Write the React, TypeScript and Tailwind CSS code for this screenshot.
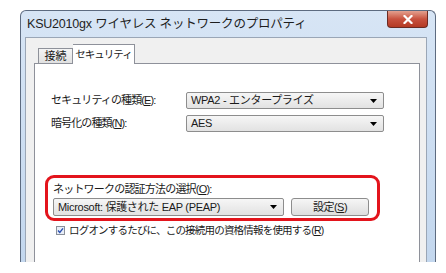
import React from 'react';

const jp = { fontFamily: '"Liberation Sans", "Noto Sans CJK JP", sans-serif' };

const Arrow: React.FC = () => (
    <svg width="7" height="4" viewBox="0 0 7 4" className="shrink-0">
        <path d="M0 0h7L3.5 4z" fill="#000" />
    </svg>
);

const Combo: React.FC<{ text: string; className?: string }> = ({ text, className }) => (
    <div className={`h-[17px] flex items-center justify-between pl-[4px] pr-[6px] border border-[#8d8d8d] rounded-[2px] bg-gradient-to-b from-[#f6f6f6] to-[#e2e2e2] text-[11px] text-[#1a1a1a] tracking-[-0.3px] ${className ?? ''}`}>
        <span className="leading-none whitespace-nowrap">{text}</span>
        <Arrow />
    </div>
);

const App: React.FC = () => {
    return (
        <div className="w-[446px] h-[273px] bg-white pt-[10px] pl-[20px] overflow-hidden" style={jp}>
            {/* Window */}
            <div className="w-[416px] h-[252px] flex flex-col rounded-t-[6px] border-t border-x border-[#5d6b80] bg-gradient-to-b from-[#d7e5f5] to-[#c3d7ee] overflow-hidden">
                {/* Title bar */}
                <div className="h-[26px] flex items-start justify-between pl-[6px] pr-[7px] shrink-0">
                    <span className="mt-[7px] text-[12.5px] leading-none text-[#1e1e1e] whitespace-nowrap tracking-[-0.2px]">
                        KSU2010gx ワイヤレス ネットワークのプロパティ
                    </span>
                    <div className="w-[41px] h-[17px] rounded-b-[4px] border border-[#6b2a22] border-t-0 bg-gradient-to-b from-[#e3a08f] via-[#c8523f] to-[#b43a24] flex items-center justify-center">
                        <svg width="10" height="9" viewBox="0 0 10 9">
                            <path d="M1.5 1l7 7M8.5 1l-7 7" stroke="#fff" strokeWidth="2.2" strokeLinecap="square" />
                        </svg>
                    </div>
                </div>

                {/* Frame + client */}
                <div className="flex-1 flex pl-[4px] pr-[8px]">
                    <div className="flex-1 bg-[#f0f0f0] border-t border-l border-r border-[#9aa6b6] flex flex-col pl-[8px] pr-[6px] pt-[5px]">
                        {/* Tabs */}
                        <div className="h-[20px] flex items-end pl-[4px] relative z-10">
                            <div className="h-[15px] w-[35px] border border-b-0 border-[#8e919a] bg-gradient-to-b from-[#f4f4f4] to-[#e1e1e1] flex items-center justify-center text-[11px] leading-none text-[#1a1a1a] whitespace-nowrap">
                                接続
                            </div>
                            <div className="h-[20px] w-[62px] -mb-[1px] border border-b-0 border-l-0 border-[#8e919a] bg-white flex items-center justify-center pb-[1px] text-[10.5px] leading-none text-[#1a1a1a] tracking-[-1px] whitespace-nowrap">
                                セキュリティ
                            </div>
                        </div>

                        {/* Tab page */}
                        <div className="flex-1 bg-white border-t border-x border-[#8e919a] pt-[28px] pl-[16px] text-[11px] text-[#1a1a1a]">
                            <div className="flex items-center h-[17px]">
                                <span className="w-[135px] tracking-[-0.9px] leading-none whitespace-nowrap">
                                    セキュリティの種類(<u>E</u>):
                                </span>
                                <Combo text="WPA2 - エンタープライズ" className="w-[198px]" />
                            </div>
                            <div className="flex items-center h-[17px] mt-[6px]">
                                <span className="w-[135px] tracking-[-0.9px] leading-none whitespace-nowrap">
                                    暗号化の種類(<u>N</u>):
                                </span>
                                <Combo text="AES" className="w-[198px]" />
                            </div>

                            {/* Authentication group */}
                            <div className="relative mt-[52px] ml-[2px] w-[316px]">
                                <div className="absolute -left-[8px] -top-[9px] w-[335px] h-[46px] border-[3px] border-[#e3141c] rounded-[9px] pointer-events-none z-10" />
                                <div className="h-[13px] leading-none tracking-[-0.8px] whitespace-nowrap">
                                    ネットワークの認証方法の選択(<u>O</u>):
                                </div>
                                <div className="flex items-center gap-[7px] mt-[1px]">
                                    <Combo text="Microsoft: 保護された EAP (PEAP)" className="w-[231px] h-[18px]" />
                                    <button className="w-[78px] h-[18px] border border-[#8d8d8d] rounded-[3px] bg-gradient-to-b from-[#f6f6f6] to-[#dedede] text-[11px] leading-none text-[#1a1a1a] tracking-[-0.5px]">
                                        設定(<u>S</u>)
                                    </button>
                                </div>
                            </div>
                            <div className="flex items-center gap-[4px] mt-[9px] ml-[5px]">
                                <svg width="9" height="9" viewBox="0 0 9 9" className="shrink-0">
                                    <rect x="0.5" y="0.5" width="8" height="8" fill="#e8eef7" stroke="#8a8f99" />
                                    <path d="M2 4.5l1.8 2L7 2.3" stroke="#2b4fb0" strokeWidth="1.4" fill="none" />
                                </svg>
                                <span className="text-[10.5px] leading-none tracking-[-0.8px] whitespace-nowrap">
                                    ログオンするたびに、この接続用の資格情報を使用する(<u>R</u>)
                                </span>
                            </div>
                        </div>
                    </div>
                </div>
            </div>
        </div>
    );
};

export default App;
